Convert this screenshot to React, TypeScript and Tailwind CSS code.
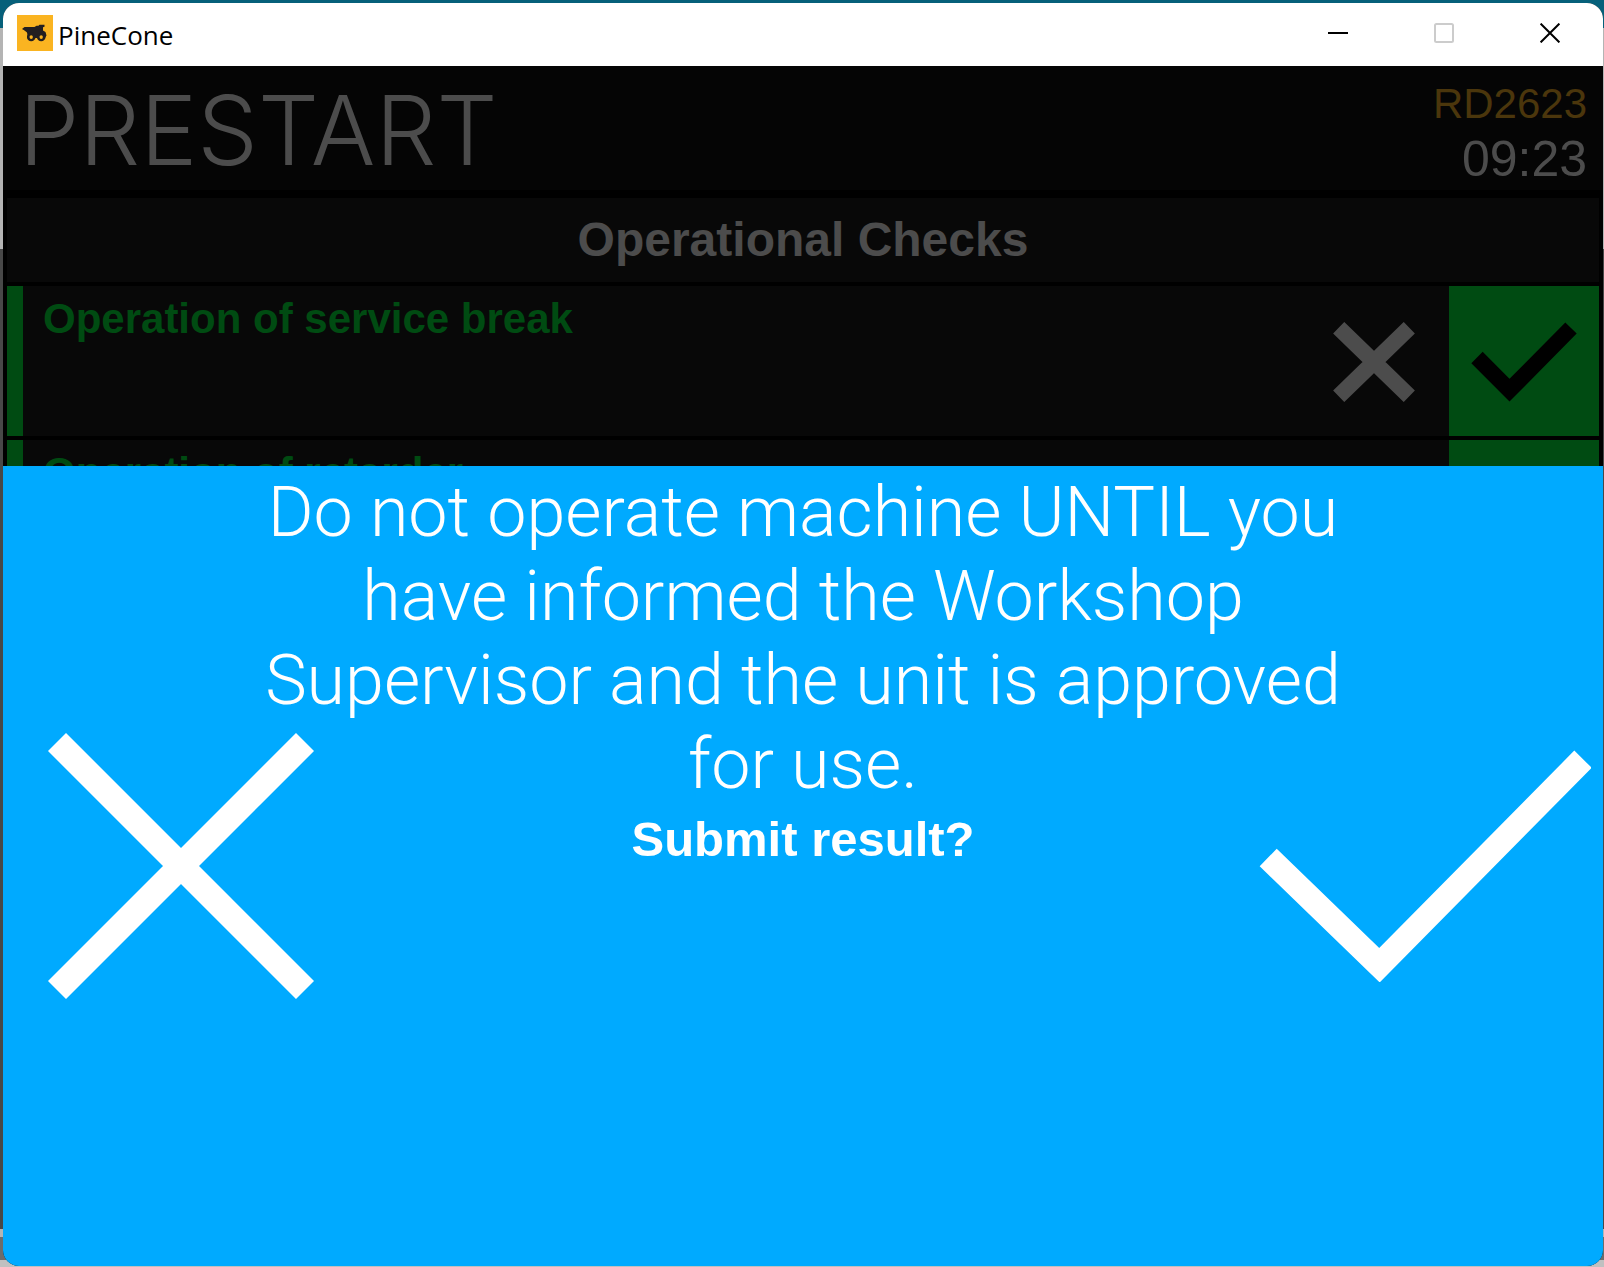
import type { ReactNode } from "react";

const CHECKS = ["Operation of service break", "Operation of retarder"];

function TruckIcon() {
  return (
    <svg aria-hidden="true" width="36" height="36" viewBox="0 0 36 36">
      <rect width="36" height="36" fill="#fab421" />
      <path
        d="M5 14 7.5 12H17.5L19.5 10.8H21.5L22.5 9.8H27.5V11.8L26 12.2V15.5L28.5 17 29.5 20.5 28 23H11L10 17.5 7.5 15.5Z"
        fill="#231f20"
      />
      <circle cx="14.2" cy="22" r="3" fill="none" stroke="#231f20" strokeWidth="2.6" />
      <circle cx="24.2" cy="22" r="3" fill="none" stroke="#231f20" strokeWidth="2.6" />
      <circle cx="14.2" cy="22" r="1.7" fill="#fab421" />
      <circle cx="24.2" cy="22" r="1.7" fill="#fab421" />
    </svg>
  );
}

function CaptionButton({ label, disabled, children }: { label: string; disabled?: boolean; children: ReactNode }) {
  return (
    <button type="button" aria-label={label} disabled={disabled} className="flex h-full w-[106px] items-center justify-center">
      <svg aria-hidden="true" width="20" height="20" viewBox="0 0 20 20" fill="none" stroke="#000" strokeWidth="2">
        {children}
      </svg>
    </button>
  );
}

function TitleBar() {
  return (
    <div className="flex h-[63px] shrink-0 items-center justify-between bg-white pb-[3px] pl-[14px]">
      <div className="flex items-center gap-[5px]">
        <TruckIcon />
        <span className="pt-1 font-['Open_Sans','Noto_Sans',sans-serif] text-[26px] leading-8 text-black">PineCone</span>
      </div>
      <div className="flex h-full">
        <CaptionButton label="Minimize">
          <path d="M0 10H20" />
        </CaptionButton>
        <CaptionButton label="Maximize" disabled>
          <rect x="1" y="1" width="18" height="18" rx="1.5" stroke="#ccc" />
        </CaptionButton>
        <CaptionButton label="Close">
          <path d="M.6.6 19.4 19.4M19.4.6.6 19.4" />
        </CaptionButton>
      </div>
    </div>
  );
}

function CheckRow({ label }: { label: string }) {
  return (
    <li className="flex h-[150px] shrink-0 border-l-16 border-[#004b12] bg-[#080808]">
      <p className="flex-1 pt-[9px] pl-5 text-[42px] leading-[48px] font-bold text-[#004b12]">{label}</p>
      <button type="button" aria-label={`Fail ${label}`} className="flex w-[150px] items-center justify-center pt-[2px] text-[#4c4c4c]">
        <svg aria-hidden="true" width="82" height="80" viewBox="0 0 82 80" stroke="currentColor" strokeWidth="16">
          <path d="M5.7 5.7 76.3 74.3M76.3 5.7 5.7 74.3" />
        </svg>
      </button>
      <button type="button" aria-label={`Pass ${label}`} className="flex w-[150px] items-center justify-center bg-[#004b12] pt-[2px] text-black">
        <svg aria-hidden="true" width="106" height="80" viewBox="0 0 106 80" fill="none" stroke="currentColor" strokeWidth="16">
          <path d="M6 35.5 38.5 68.2 100 6" />
        </svg>
      </button>
    </li>
  );
}

function SubmitDialog() {
  return (
    <section
      role="dialog"
      aria-label="Submit result"
      className="absolute inset-x-0 bottom-0 grid h-2/3 grid-cols-[356px_1fr_356px] grid-rows-1 bg-[#00aaff] text-white"
    >
      <div className="col-span-3 col-start-1 row-start-1 w-3/4 justify-self-center pt-1 text-center">
        <p className="font-['Roboto',sans-serif] text-[70px] leading-[84px] font-light">
          Do not operate machine UNTIL you
          <br />
          have informed the Workshop
          <br />
          Supervisor and the unit is approved
          <br />
          for use.
        </p>
        <p className="text-[49px] leading-[66px] font-bold">Submit result?</p>
      </div>
      <button type="button" aria-label="Cancel" className="col-start-1 row-start-1 flex items-center justify-center self-center">
        <svg aria-hidden="true" width="266" height="266" viewBox="0 0 266 266" stroke="currentColor" strokeWidth="25.5">
          <path d="M9 9 257 257M257 9 9 257" />
        </svg>
      </button>
      <button type="button" aria-label="Submit" className="col-start-3 row-start-1 flex items-center justify-center self-center">
        <svg aria-hidden="true" width="332" height="232" viewBox="0 0 332 232" fill="none" stroke="currentColor" strokeWidth="24.5">
          <path d="M9.2 107.5 120.5 215.2 324 9.2" />
        </svg>
      </button>
    </section>
  );
}

// Slivers of the desktop that show around the window edges
function Desktop() {
  return (
    <div aria-hidden="true" className="absolute inset-0 flex flex-col">
      <div className="h-7 bg-[#06607a]" />
      <div className="h-[221px] bg-[#b4b4b4]" />
      <div className="flex-1 bg-[#484848]" />
      <div className="h-2 bg-[#b4b4b4]" />
      <div className="h-[23px] bg-[#6c6c6c]" />
      <div className="h-[7px] bg-[#c0c0c0]" />
    </div>
  );
}

export default function App() {
  return (
    <div className="relative h-screen overflow-hidden pt-[3px] pr-px pb-px pl-[3px] font-['Liberation_Sans',Arial,sans-serif]">
      <Desktop />
      <div className="relative flex h-full flex-col overflow-hidden rounded-2xl bg-black">
        <TitleBar />
        <main className="relative min-h-0 flex-1 overflow-hidden">
          <header className="flex h-[124px] items-center justify-between bg-[#050505] px-4 pt-1">
            <h1 className="font-['Inter',sans-serif] text-[96px] leading-[120px] font-light text-[#4c4c4c]">PRESTART</h1>
            <div className="pt-[6px] text-right">
              <p className="text-[42px] leading-[52px] text-[#4b360c]">RD2623</p>
              <p className="text-[50px] leading-[58px] text-[#4c4c4c]">09:23</p>
            </div>
          </header>
          <div className="mt-2 flex flex-col gap-1 px-1">
            <h2 className="bg-[#080808] text-center text-[48px] leading-[84px] font-bold text-[#4c4c4c]">Operational Checks</h2>
            <ul className="flex flex-col gap-1">
              {CHECKS.map((label) => (
                <CheckRow key={label} label={label} />
              ))}
            </ul>
          </div>
          <SubmitDialog />
        </main>
      </div>
    </div>
  );
}
